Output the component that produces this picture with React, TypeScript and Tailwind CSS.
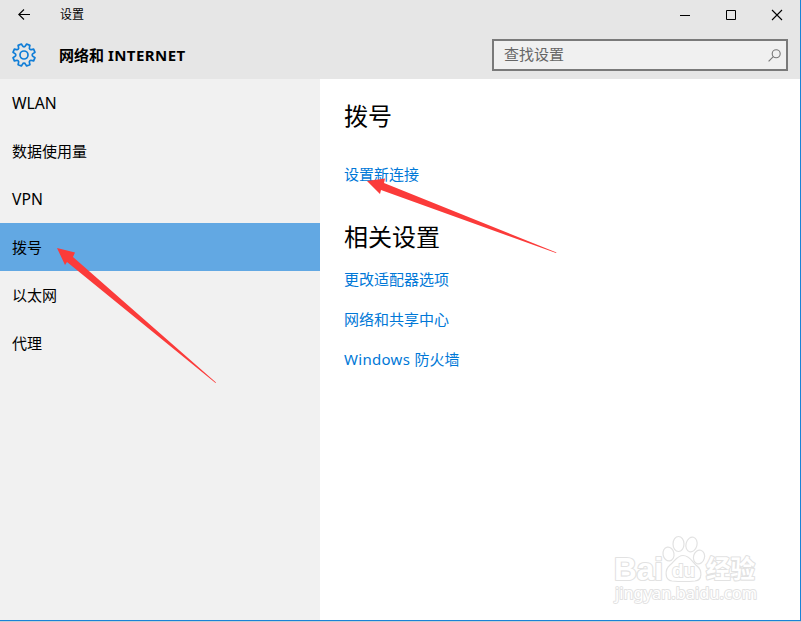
import React from 'react'

const navItems = ['WLAN', '数据使用量', 'VPN', '拨号', '以太网', '代理']
const relatedLinks = ['更改适配器选项', '网络和共享中心']

// eight teeth, with a notch facing straight up
function gearPath() {
  const points = [
    [-22.5 - 9, 11.3],
    [-22.5 + 9, 11.3],
    [-9, 9.2],
    [9, 9.2],
  ]
  let d = ''
  for (let i = 0; i < 8; i++) {
    points.forEach(([deg, r], n) => {
      const a = ((deg + i * 45 - 90) * Math.PI) / 180
      const x = (13 + r * Math.cos(a)).toFixed(2)
      const y = (13 + r * Math.sin(a)).toFixed(2)
      if (i === 0 && n === 0) d += `M${x} ${y}`
      else if (n === 3) d += `A1.6 1.6 0 0 0 ${x} ${y}`
      else d += `L${x} ${y}`
    })
  }
  return d + 'Z'
}

function TitleBar() {
  return (
    <div className="flex h-[30px] items-center">
      <svg className="ml-[18px] h-[12px] w-[13px]" viewBox="0 0 13 12" fill="none" stroke="#000" strokeWidth="1.1">
        <path d="M12 5.500H1M6 0.500L0.800 5.500L6 10.500" />
      </svg>
      <span className="ml-[29px] text-[12px] leading-[30px]">设置</span>
      <div className="ml-auto flex">
        <svg className="h-[30px] w-[46px]" viewBox="0 0 46 30" fill="none" stroke="#000">
          <path d="M18 15.5h10" />
        </svg>
        <svg className="h-[30px] w-[46px]" viewBox="0 0 46 30" fill="none" stroke="#000">
          <path d="M18.5 10.5h9v9h-9z" />
        </svg>
        <svg className="h-[30px] w-[46px]" viewBox="0 0 46 30" fill="none" stroke="#000" strokeWidth="1.1">
          <path d="M18 10l10 10M28 10L18 20" />
        </svg>
      </div>
    </div>
  )
}

function Header() {
  return (
    <div className="flex h-[49px] items-start">
      <svg className="ml-[11px] mt-[12px] h-[26px] w-[26px]" viewBox="0 0 26 26" fill="none" stroke="#0f7dd7" strokeWidth="1.7" strokeLinejoin="round">
        <path d={gearPath()} />
        <circle cx="13" cy="13" r="4" />
      </svg>
      <h1 className="ml-[22px] mt-[13px] text-[15px] leading-6 font-bold">
        网络和 <span className="tracking-[0.45px]">INTERNET</span>
      </h1>
      <div className="mt-[9px] mr-[12px] ml-auto flex h-[32px] w-[296px] items-center justify-between border-2 border-[#7a7a7a] bg-[#f0f0f0] pr-[5px] pl-[10px]">
        <span className="-mt-[2px] text-[15px] leading-7 text-[#666]">查找设置</span>
        <svg className="h-[13px] w-[13px]" viewBox="0 0 13 13" fill="none" stroke="#777" strokeWidth="1.1">
          <circle cx="8.2" cy="4.8" r="4" />
          <path d="M5.3 7.6L0.6 12.4" />
        </svg>
      </div>
    </div>
  )
}

function Sidebar() {
  return (
    <div className="w-[320px] bg-[#f1f1f1]">
      {navItems.map((item) => (
        <div
          key={item}
          className={
            item === '拨号'
              ? 'h-12 bg-[#62a8e3] pl-3 text-[15px] leading-[48px]'
              : 'h-12 pl-3 text-[15px] leading-[48px]'
          }
        >
          {/^[A-Z]+$/.test(item) ? (
            <span className="text-[15.700px]">{item}</span>
          ) : (
            item
          )}
        </div>
      ))}
    </div>
  )
}

function Watermark() {
  return (
    <svg
      className="absolute top-[532px] left-[608px] h-[76px] w-[156px]"
      viewBox="0 0 156 76"
      fill="#fff"
      stroke="#e2e2e2"
      strokeWidth="1.2"
      fontFamily='"Liberation Sans", "Noto Sans CJK SC", sans-serif'
    >
      <g fontWeight="bold" strokeLinejoin="round" strokeWidth="2.2" paintOrder="stroke">
        <text x="6" y="48" fontSize="31" textLength="49" lengthAdjust="spacingAndGlyphs">Bai</text>
        <text x="98" y="46" fontSize="25" textLength="49" lengthAdjust="spacingAndGlyphs">经验</text>
      </g>
      <ellipse cx="60.5" cy="22" rx="5.5" ry="7" transform="rotate(-10 60.5 22)" />
      <ellipse cx="70.5" cy="12" rx="5.5" ry="7.5" />
      <ellipse cx="83.5" cy="12.5" rx="5.5" ry="7.5" transform="rotate(15 83.5 12.5)" />
      <ellipse cx="91" cy="25" rx="5.5" ry="7" transform="rotate(15 91 25)" />
      <path d="M75 23.500C69 23.500 67 29 62 33C57 37 56 48 64 49C70 49.500 82 49.500 87 49C95 48 94 38 89 34C84 30 82 23.500 75 23.500Z" />
      <text x="64" y="45" fontSize="19" fontWeight="bold" strokeWidth="1.8" paintOrder="stroke" textLength="23" lengthAdjust="spacingAndGlyphs">du</text>
      <text x="7" y="67" fontSize="15.500" fontFamily='"Noto Sans", sans-serif' strokeWidth="1.8" paintOrder="stroke" strokeLinejoin="round" textLength="142" lengthAdjust="spacingAndGlyphs">jingyan.baidu.com</text>
    </svg>
  )
}

function Arrows() {
  return (
    <svg className="pointer-events-none absolute top-0 left-0 h-[622px] w-[801px]" viewBox="0 0 801 622" fill="#fb3b3a">
      <path d="M57 248L75 252.500L73 257L216 382.500L215.500 383L67 262L65 265Z" />
      <path d="M367 181L385 178.500L384 183L556.500 252.500L556 253L381 190L380 194Z" />
    </svg>
  )
}

function App() {
  return (
    <div
      className="relative flex h-[622px] w-[801px] flex-col overflow-hidden border-b border-[#c8ccd0] bg-white text-black"
      style={{ fontFamily: '"Noto Sans", "Noto Sans CJK SC", sans-serif' }}
    >
      <div className="flex flex-1 flex-col border-r border-b border-[#1883d7]">
        <div className="bg-[#e6e6e6]">
          <TitleBar />
          <Header />
        </div>
        <div className="flex flex-1">
          <Sidebar />
          <div className="flex-1 pl-6">
            <h2 className="mt-[19px] text-[24px] leading-9">拨号</h2>
            <a className="mt-[28px] block text-[15px] leading-6 text-[#0078d7]">设置新连接</a>
            <h2 className="mt-[33px] text-[24px] leading-9">相关设置</h2>
            <div className="mt-[12px] flex flex-col gap-4 text-[15px] leading-6 text-[#0078d7]">
              {relatedLinks.map((link) => (
                <a key={link}>{link}</a>
              ))}
              <a>
                <span className="tracking-[0.3px]">Windows </span>防火墙
              </a>
            </div>
          </div>
        </div>
      </div>
      <Watermark />
      <Arrows />
    </div>
  )
}

export default App
